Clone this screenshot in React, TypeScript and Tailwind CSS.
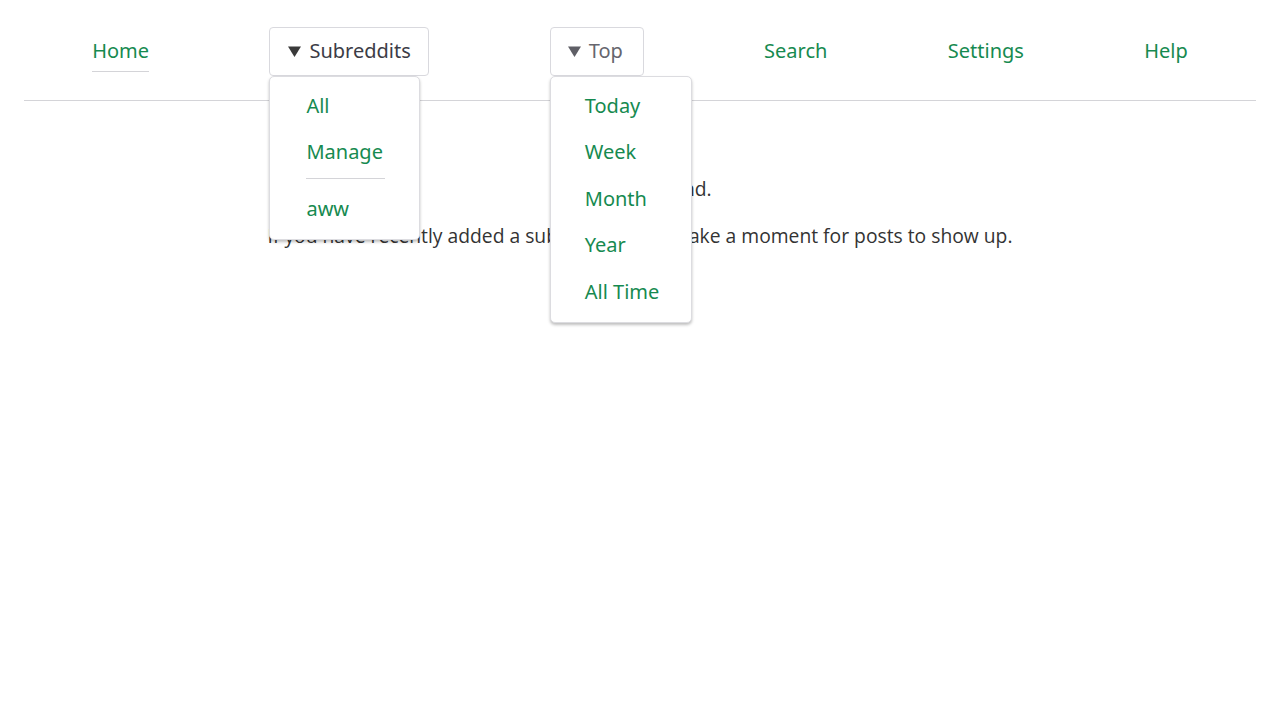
import React from "react";

const navFont = { fontFamily: '"Noto Sans", "Open Sans", sans-serif' };

function Caret({ color }: { color: string }) {
  return (
    <svg width="13" height="11" viewBox="0 0 13 11" className="shrink-0">
      <path d="M0 0.5 H13 L6.5 11 Z" fill={color} />
    </svg>
  );
}

function DropMenu({ width, children }: { width: string; children: React.ReactNode }) {
  return (
    <div
      className={`absolute left-0 top-full z-10 rounded-[5px] border border-[#dcdce0] bg-white pt-[6px] pb-[7px] shadow-[0_2px_3px_rgba(0,0,0,0.25)] ${width}`}
    >
      {children}
    </div>
  );
}

function MenuItem({ label }: { label: string }) {
  return (
    <a href="#" className="flex h-[46.5px] items-center text-[20px] text-[#168a50] whitespace-nowrap">
      {label}
    </a>
  );
}

export default function App() {
  return (
    <div className="min-h-screen w-full bg-white px-6" style={navFont}>
      <header className="flex h-[101px] items-center justify-around border-b border-[#d4d4d8] px-2 pt-[2px]">
        <a href="#" className="relative text-[20px] leading-none text-[#168a50]">
          Home
          <span className="absolute -bottom-[11px] left-0 right-0 h-px bg-[#d4d4d8]" />
        </a>

        <div className="relative">
          <button className="flex h-[49px] w-[160px] items-center gap-[8px] rounded-[4px] border border-[#d9d9de] bg-white pl-[18px] text-[20px] text-[#3c3c46]">
            <Caret color="#3a3a3a" />
            Subreddits
          </button>
          <DropMenu width="w-[151px] pl-[36px]">
            <MenuItem label="All" />
            <MenuItem label="Manage" />
            <div className="mt-[2px] mb-[7px] h-px w-[79px] bg-[#d4d4d8]" />
            <MenuItem label="aww" />
          </DropMenu>
        </div>

        <div className="relative">
          <button className="flex h-[49px] w-[94px] items-center gap-[8px] rounded-[4px] border border-[#d9d9de] bg-white pl-[17px] text-[20px] text-[#66666e]">
            <Caret color="#5f5f66" />
            Top
          </button>
          <DropMenu width="w-[142px] pl-[34px]">
            <MenuItem label="Today" />
            <MenuItem label="Week" />
            <MenuItem label="Month" />
            <MenuItem label="Year" />
            <MenuItem label="All Time" />
          </DropMenu>
        </div>

        <a href="#" className="text-[20px] text-[#168a50]">Search</a>
        <a href="#" className="text-[20px] text-[#168a50]">Settings</a>
        <a href="#" className="text-[20px] text-[#168a50]">Help</a>
      </header>

      <main
        className="mt-[74px] flex flex-col items-center gap-5 text-[19.3px] leading-[27px] text-[#333]"
        style={{ fontFamily: '"Open Sans", sans-serif' }}
      >
        <p>No posts found.</p>
        <p>If you have recently added a subreddit, it may take a moment for posts to show up.</p>
      </main>
    </div>
  );
}
